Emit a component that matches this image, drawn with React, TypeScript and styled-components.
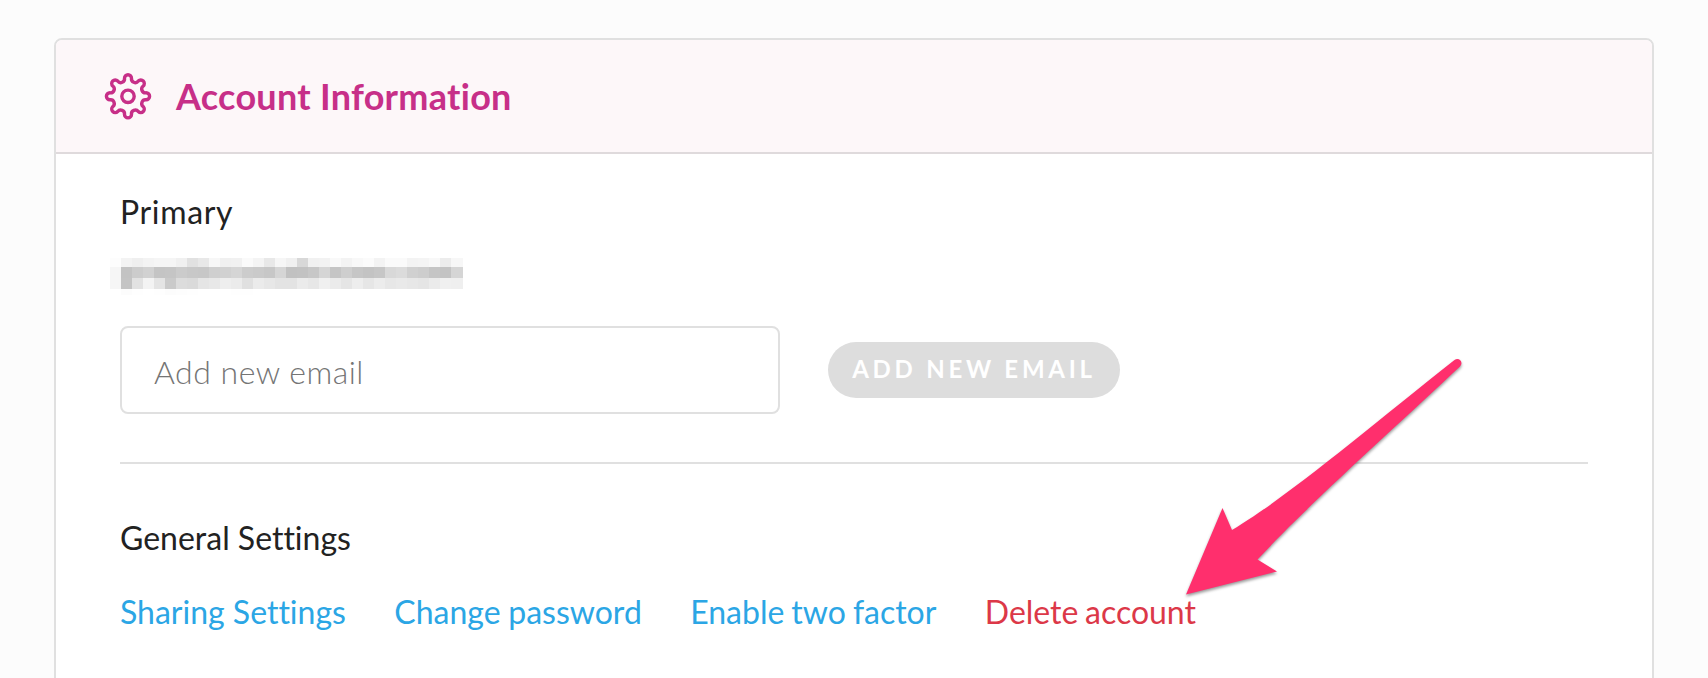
import React from "react";
import styled, { createGlobalStyle } from "styled-components";

const GlobalStyle = createGlobalStyle`
  * { box-sizing: border-box; }
  html, body { margin: 0; height: 100%; overflow: hidden; background: #fcfcfc; }
  body {
    font-family: Lato, sans-serif;
    font-size: 32px;
    font-variant-ligatures: none;
    color: #222;
  }
`;

const Page = styled.main`
  position: relative;
  height: 678px;
  padding: 38px 54px 0;
  overflow: hidden;
`;

const Card = styled.section`
  height: 720px;
  border: 2px solid #e0e0e0;
  border-radius: 8px;
  background: #fff;
  overflow: hidden;
`;

const CardHeader = styled.header`
  display: flex;
  align-items: center;
  gap: 24px;
  height: 114px;
  padding: 0 48px;
  border-bottom: 2px solid #dfdadc;
  background: #fdf7f9;
  color: #c72f88;
`;

const Title = styled.h1`
  margin: 0;
  font-size: 36px;
  font-weight: 700;
  line-height: 48px;
  letter-spacing: 0.28px;
`;

const CardBody = styled.div`
  padding: 34px 64px 0;
`;

const SectionTitle = styled.h2<{ $tracking?: number }>`
  margin: 0;
  font-size: 32px;
  font-weight: 400;
  line-height: 48px;
  letter-spacing: ${(p) => p.$tracking ?? 0}px;
`;

const Mosaic = styled.div`
  display: grid;
  grid-template-columns: repeat(31, 11px) 12px;
  grid-template-rows: 9px 11px 11px 6px;
  margin: 22px 0 0 -10px;
`;

const Cell = styled.span<{ $shade: number }>`
  background: rgb(${(p) => `${p.$shade}, ${p.$shade}, ${p.$shade}`});
`;

const EmailForm = styled.form`
  display: flex;
  align-items: center;
  gap: 48px;
  margin-top: 31px;
`;

const EmailInput = styled.input`
  width: 660px;
  height: 88px;
  padding: 2px 32px 0;
  border: 2px solid #e0e0e0;
  border-radius: 8px;
  background: #fff;
  font: 300 32px Lato, sans-serif;
  letter-spacing: 0.5px;
  &::placeholder { color: #757575; opacity: 1; }
`;

const AddButton = styled.button`
  width: 292px;
  height: 56px;
  padding: 0 0 3px;
  border: 0;
  border-radius: 28px;
  background: #ddd;
  color: #fff;
  font: 700 24px Lato, sans-serif;
  letter-spacing: 3.75px;
  white-space: nowrap;
`;

const Divider = styled.hr`
  height: 2px;
  margin: 48px 0 50px;
  border: 0;
  background: #e0e0e0;
`;

const Links = styled.nav`
  display: flex;
  gap: 48.4px;
  margin-top: 26px;
  line-height: 48px;
`;

const SettingsLink = styled.a<{ $danger?: boolean; $wordGap?: number }>`
  color: ${(p) => (p.$danger ? "#dc3848" : "#2ba6e5")};
  word-spacing: ${(p) => p.$wordGap ?? 0}px;
  text-decoration: none;
`;

const Arrow = styled.svg`
  position: absolute;
  left: 1160px;
  top: 340px;
  filter: drop-shadow(0 2px 1.5px rgba(0, 0, 0, 0.4));
`;

const EMAIL_SHADES = [
  [253, 243, 239, 243, 245, 245, 240, 225, 232, 247, 240, 241, 250, 244, 232, 246, 240, 216, 241, 242, 249, 243, 248, 251, 243, 250, 250, 243, 244, 248, 236, 247],
  [246, 195, 204, 209, 196, 197, 203, 200, 199, 207, 209, 213, 204, 202, 199, 213, 193, 194, 199, 213, 197, 206, 198, 195, 198, 216, 219, 208, 205, 197, 195, 213],
  [246, 196, 226, 243, 228, 202, 220, 218, 229, 232, 238, 235, 224, 235, 231, 227, 227, 235, 231, 240, 235, 229, 237, 230, 236, 231, 233, 231, 229, 235, 240, 239],
  [255, 252, 254, 255, 254, 252, 253, 254, 255, 255, 255, 254, 254, 255, 255, 255, 255, 255, 255, 255, 255, 255, 255, 255, 255, 255, 255, 255, 255, 255, 255, 255],
];

const TEETH = 8;
const STEP = 360 / TEETH;
const CAP = { radius: 3.5, distance: 18.5 };
const VALLEY = { radius: 3.8, distance: 19.1 };

const polar = (r: number, deg: number) => {
  const a = (deg * Math.PI) / 180;
  return [r * Math.sin(a), -r * Math.cos(a)];
};

// Point where the arc of a tooth touches the arc of the valley beside it.
const joint = (toothDeg: number, valleyDeg: number) => {
  const k = CAP.radius / (CAP.radius + VALLEY.radius);
  const [cx, cy] = polar(CAP.distance, toothDeg);
  const [vx, vy] = polar(VALLEY.distance, valleyDeg);
  return `${(cx + (vx - cx) * k).toFixed(2)} ${(cy + (vy - cy) * k).toFixed(2)}`;
};

const gearPath =
  `M${joint(0, -STEP / 2)}` +
  Array.from({ length: TEETH }, (_, i) => {
    const deg = i * STEP;
    return (
      `A${CAP.radius} ${CAP.radius} 0 1 1 ${joint(deg, deg + STEP / 2)}` +
      `A${VALLEY.radius} ${VALLEY.radius} 0 0 0 ${joint(deg + STEP, deg + STEP / 2)}`
    );
  }).join("") +
  "Z";

const GearIcon = () => (
  <svg width="48" height="48" viewBox="-24 -24.3 48 48" fill="none" stroke="currentColor" strokeWidth="3.4">
    <path d={gearPath} />
    <circle r="6.2" />
  </svg>
);

export default function App() {
  return (
    <>
      <GlobalStyle />
      <Page>
        <Card>
          <CardHeader>
            <GearIcon />
            <Title>Account Information</Title>
          </CardHeader>
          <CardBody>
            <SectionTitle $tracking={0.65}>Primary</SectionTitle>
            <Mosaic aria-hidden="true">
              {EMAIL_SHADES.flatMap((row, y) => row.map((shade, x) => <Cell key={`${y}-${x}`} $shade={shade} />))}
            </Mosaic>
            <EmailForm>
              <EmailInput placeholder="Add new email" />
              <AddButton type="button">ADD NEW EMAIL</AddButton>
            </EmailForm>
            <Divider />
            <SectionTitle>General Settings</SectionTitle>
            <Links>
              <SettingsLink href="#">Sharing Settings</SettingsLink>
              <SettingsLink href="#" $wordGap={-0.5}>Change password</SettingsLink>
              <SettingsLink href="#" $wordGap={-1.2}>Enable two factor</SettingsLink>
              <SettingsLink href="#" $danger $wordGap={-1.6}>Delete account</SettingsLink>
            </Links>
          </CardBody>
        </Card>
        <Arrow width="330" height="270" viewBox="0 0 330 270" aria-hidden="true">
          <path
            fill="#ff2f6d"
            d="M26 254.500L62.500 168L72 190C126 158 205 91 294.500 20C299 17 304 22 300 26.500C238 85 150 163 97.500 219.500L117 231.500Z"
          />
        </Arrow>
      </Page>
    </>
  );
}
